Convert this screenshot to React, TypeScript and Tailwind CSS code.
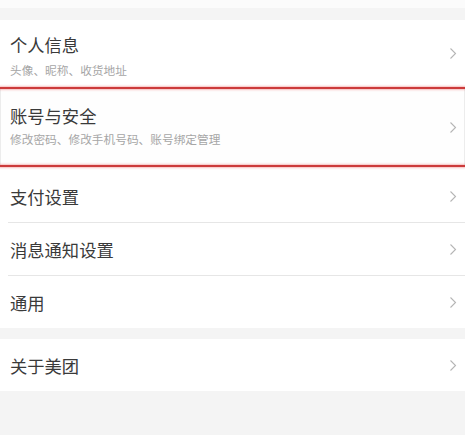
const font = { fontFamily: '"Noto Sans CJK SC", "Noto Sans", sans-serif' };

function Chevron() {
  return (
    <svg width="8" height="13" viewBox="0 0 8 13" className="shrink-0" fill="none">
      <polyline points="1.5,1.5 6.5,6.5 1.5,11.5" stroke="#b5b5b5" strokeWidth="1.1" />
    </svg>
  );
}

function RedLine() {
  return <div className="relative z-10 h-[2px] bg-[#cc3b3b] shadow-[0_0_2px_1px_rgba(235,110,110,0.45)]" />;
}

function SimpleRow({ title, divider = false }: { title: string; divider?: boolean }) {
  return (
    <div className="bg-white">
      {divider && <div className="ml-2 h-px bg-[#e6e6e6]" />}
      <div className="h-[52px] pl-[10px] pr-[8px] pt-[1px] flex items-center justify-between">
        <span className="text-[17.3px] leading-6 text-[#3a3a3a]">{title}</span>
        <Chevron />
      </div>
    </div>
  );
}

export default function App() {
  return (
    <div className="w-[465px] h-[435px] bg-[#f4f4f4] overflow-hidden" style={font}>
      <div className="h-2 bg-[#fbfbfb]" />
      <div className="h-3" />

      {/* 个人信息 */}
      <div className="h-[67px] bg-white pl-[10px] pr-[8px] flex items-center justify-between">
        <div className="flex flex-col pt-[4px]">
          <span className="text-[17.3px] leading-6 text-[#3a3a3a]">个人信息</span>
          <span className="text-[11.7px] leading-4 mt-[5px] text-[#a6a6a6]">头像、昵称、收货地址</span>
        </div>
        <Chevron />
      </div>

      <RedLine />

      {/* 账号与安全 */}
      <div className="h-[76px] bg-[#fefefe] border-x border-[#ececec] pl-[9px] pr-[7px] flex items-center justify-between">
        <div className="flex flex-col -mt-[4px]">
          <span className="text-[17.3px] leading-6 text-[#3a3a3a]">账号与安全</span>
          <span className="text-[11.7px] leading-4 mt-[3px] text-[#a6a6a6]">修改密码、修改手机号码、账号绑定管理</span>
        </div>
        <Chevron />
      </div>

      <RedLine />

      <div className="h-[3px] bg-white" />
      <SimpleRow title="支付设置" />
      <SimpleRow title="消息通知设置" divider />
      <SimpleRow title="通用" divider />

      <div className="h-[11px]" />
      <SimpleRow title="关于美团" />
    </div>
  );
}
